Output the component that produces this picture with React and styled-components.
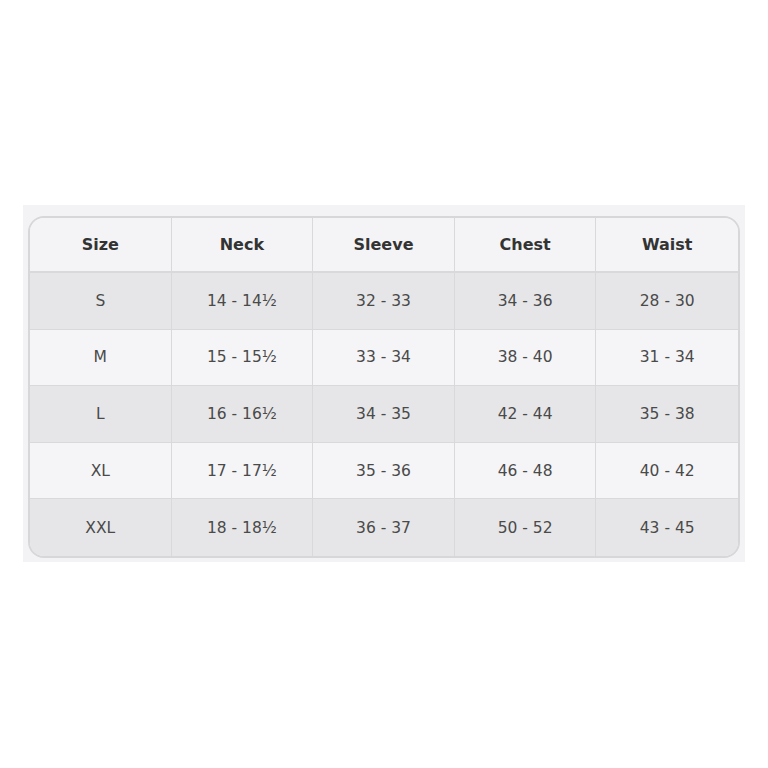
import React from 'react'
import styled, { createGlobalStyle } from 'styled-components'

const GlobalStyle = createGlobalStyle`
  html, body {
    margin: 0;
    padding: 0;
    background: #ffffff;
    font-family: "DejaVu Sans", Verdana, sans-serif;
  }
`

const columns = ['Size', 'Neck', 'Sleeve', 'Chest', 'Waist']

const rows = [
  ['S', '14 - 14½', '32 - 33', '34 - 36', '28 - 30'],
  ['M', '15 - 15½', '33 - 34', '38 - 40', '31 - 34'],
  ['L', '16 - 16½', '34 - 35', '42 - 44', '35 - 38'],
  ['XL', '17 - 17½', '35 - 36', '46 - 48', '40 - 42'],
  ['XXL', '18 - 18½', '36 - 37', '50 - 52', '43 - 45'],
]

const SizeChart = () => {
  return (
    <Page>
      <Panel>
        <Table>
          {columns.map((c) => (
            <HeadCell key={c}>{c}</HeadCell>
          ))}
          {rows.map((row, i) =>
            row.map((v, j) => (
              <Cell key={`${i}-${j}`} $shaded={i % 2 === 0}>
                {v}
              </Cell>
            ))
          )}
        </Table>
      </Panel>
    </Page>
  )
}

const Page = styled.div`
  width: 768px;
  height: 768px;
  padding: 205px 0 0 23px;
  box-sizing: border-box;
`

const Panel = styled.div`
  width: 722px;
  box-sizing: border-box;
  padding: 11px 5px 4px 5px;
  background: #f3f3f5;
`

const Table = styled.div`
  display: grid;
  grid-template-columns: repeat(5, 1fr);
  grid-template-rows: 55px repeat(5, 56.6px);
  border: 2px solid #d7d7d9;
  border-radius: 16px;
  overflow: hidden;
  background: #f4f4f6;
`

const Base = styled.div`
  display: flex;
  align-items: center;
  justify-content: center;
  border-right: 1px solid #d9d9db;
  border-bottom: 1px solid #d9d9db;
  &:nth-child(5n) {
    border-right: none;
  }
`

const HeadCell = styled(Base)`
  font-size: 16px;
  font-weight: bold;
  color: #333;
  background: #f4f4f6;
  border-bottom: 2px solid #d9d9db;
`

const Cell = styled(Base)`
  font-size: 15.5px;
  color: #4a4a4a;
  background: ${(p) => (p.$shaded ? '#e6e6e8' : '#f5f5f7')};
  &:nth-last-child(-n + 5) {
    border-bottom: none;
  }
`

export default function App() {
  return (
    <>
      <GlobalStyle />
      <SizeChart />
    </>
  )
}
